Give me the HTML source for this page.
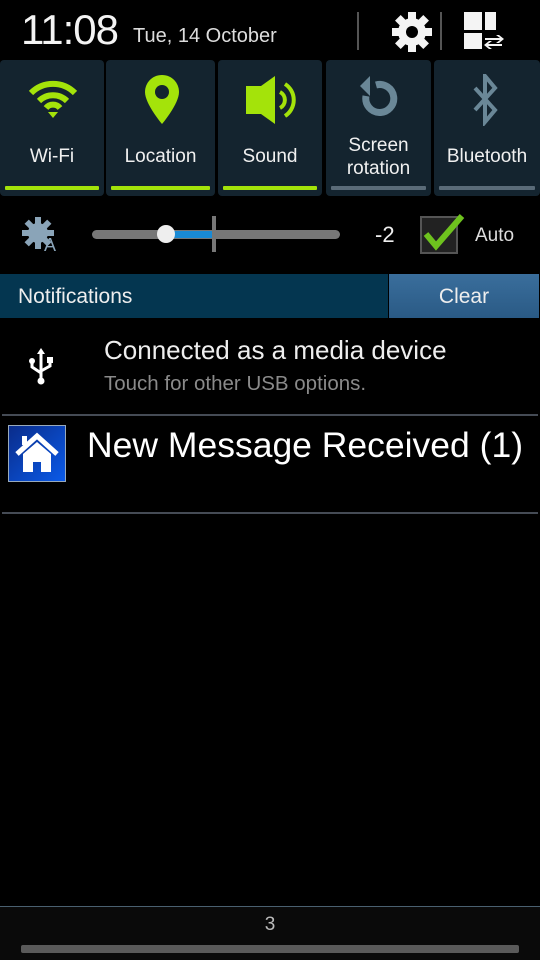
<!DOCTYPE html><html><head><style>
body{margin:0;width:540px;height:960px;background:#000;font-family:"Liberation Sans",sans-serif;color:#fff;position:relative;overflow:hidden}
.a{position:absolute}
.tile{position:absolute;top:60px;height:136px;background:#14242f;border-radius:4px}
.tile .l{position:absolute;left:0;right:0;text-align:center;font-size:19px;color:#f0f0f0}
.tile .b{position:absolute;left:5px;right:5px;top:126px;height:4px;border-radius:1px}
.g{background:#a4e30a}.gr{background:#5a6b78}
</style></head><body>
<div class="a" style="left:21px;top:6px;font-size:42px;color:#f4f4f4;letter-spacing:-1px">11:08</div>
<div class="a" style="left:133px;top:25px;font-size:20px;color:#ddd">Tue, 14 October</div>
<div class="a" style="left:357px;top:12px;width:2px;height:38px;background:#555"></div>
<div class="a" style="left:440px;top:12px;width:2px;height:38px;background:#555"></div>
<svg class="a" style="left:390px;top:10px" width="44" height="44" viewBox="0 0 44 44"><g fill="#f4f4f4" transform="translate(22 22)"><circle r="14"/><rect x="-4" y="-20" width="8" height="40"/><rect x="-4" y="-20" width="8" height="40" transform="rotate(45)"/><rect x="-4" y="-20" width="8" height="40" transform="rotate(90)"/><rect x="-4" y="-20" width="8" height="40" transform="rotate(135)"/></g><circle cx="22" cy="22" r="6" fill="#000"/></svg>
<svg class="a" style="left:464px;top:12px" width="40" height="40"><g fill="#f4f4f4"><rect x="0" y="0" width="18" height="18"/><rect x="21" y="0" width="11" height="18"/><rect x="0" y="21" width="18" height="16"/><path d="M21 26h15l-4-3h3l5 4-5 4h-3l4-3H21zM38 32H24l4-3h-3l-5 4 5 4h3l-4-3h14z"/></g></svg>

<div class="tile" style="left:0;width:104px"><svg class="a" style="left:28px;top:20px" width="50" height="40" viewBox="0 0 50 40"><g fill="none" stroke="#a4e30a" stroke-width="6"><path d="M3 13a31 31 0 0 1 44 0"/><path d="M11 21a20 20 0 0 1 28 0"/><path d="M18 28a9 9 0 0 1 14 0"/></g><path d="M25 38l-5-6h10z" fill="#a4e30a"/></svg><div class="l" style="top:86px">Wi-Fi</div><div class="b g"></div></div>
<div class="tile" style="left:106px;width:109px"><svg class="a" style="left:37px;top:14px" width="38" height="52" viewBox="0 0 38 52"><path d="M19 1C9 1 2 9 2 18c0 12 17 32 17 32s17-20 17-32C36 9 29 1 19 1z" fill="#a4e30a"/><circle cx="19" cy="18" r="7" fill="#14242f"/></svg><div class="l" style="top:86px">Location</div><div class="b g"></div></div>
<div class="tile" style="left:218px;width:104px"><svg class="a" style="left:20px;top:16px" width="62" height="48" viewBox="0 0 62 48"><path d="M8 10h15L37 0v48L23 38H8z" fill="#a4e30a"/><g fill="none" stroke="#a4e30a" stroke-width="4"><path d="M42 16a9 9 0 0 1 0 16"/><path d="M47 8a19 19 0 0 1 0 32"/></g></svg><div class="l" style="top:86px">Sound</div><div class="b g"></div></div>
<div class="tile" style="left:326px;width:105px"><svg class="a" style="left:30px;top:16px" width="46" height="46" viewBox="0 0 46 46"><path d="M10 20A14 14 0 1 0 20 9" fill="none" stroke="#6a8797" stroke-width="7"/><path d="M14 0v20l-10-10z" fill="#6a8797"/></svg><div class="l" style="top:74px;line-height:23px">Screen<br>rotation</div><div class="b gr"></div></div>
<div class="tile" style="left:434px;width:106px"><svg class="a" style="left:36px;top:14px" width="32" height="52" viewBox="0 0 32 52"><path d="M5 14l20 22-10 12V2l10 12L5 36" fill="none" stroke="#6a8797" stroke-width="4"/></svg><div class="l" style="top:86px">Bluetooth</div><div class="b gr"></div></div>

<svg class="a" style="left:22px;top:216px" width="40" height="36" viewBox="0 0 40 36"><g fill="#8aa4b8" transform="translate(16 17)"><circle r="10"/><rect x="-3" y="-16" width="6" height="32"/><rect x="-3" y="-16" width="6" height="32" transform="rotate(45)"/><rect x="-3" y="-16" width="6" height="32" transform="rotate(90)"/><rect x="-3" y="-16" width="6" height="32" transform="rotate(135)"/></g><text x="22" y="35" font-size="18" fill="#8aa4b8" font-family="Liberation Sans">A</text></svg>
<div class="a" style="left:92px;top:230px;width:248px;height:9px;background:#777;border-radius:5px"></div>
<div class="a" style="left:168px;top:231px;width:46px;height:7px;background:#1a8ad4"></div>
<div class="a" style="left:212px;top:216px;width:4px;height:36px;background:#777"></div>
<div class="a" style="left:157px;top:225px;width:18px;height:18px;background:#eee;border-radius:50%"></div>
<div class="a" style="left:375px;top:222px;font-size:22px;color:#eee">-2</div>
<div class="a" style="left:420px;top:216px;width:38px;height:38px;border:2px solid #555;background:#222;box-sizing:border-box"></div>
<svg class="a" style="left:420px;top:212px" width="46" height="40"><path d="M6 22l10 12L42 4" fill="none" stroke="#6ec21e" stroke-width="6"/></svg>
<div class="a" style="left:475px;top:225px;font-size:19px;color:#ddd">Auto</div>

<div class="a" style="left:0;top:274px;width:388px;height:44px;background:#043650"></div>
<div class="a" style="left:18px;top:285px;font-size:21px;color:#eee">Notifications</div>
<div class="a" style="left:389px;top:274px;width:150px;height:44px;background:linear-gradient(#3a6e9c,#2a5a85);text-align:center;line-height:46px;font-size:21px;color:#eee">Clear</div>

<svg class="a" style="left:28px;top:348px" width="26" height="38" viewBox="0 0 26 38"><g fill="#fff" stroke="#fff"><path d="M13 2v32" stroke-width="3"/><path d="M13 0l-4 6h8z" stroke="none"/><circle cx="13" cy="33" r="3.5" stroke="none"/><circle cx="4" cy="13" r="3" stroke="none"/><rect x="19" y="9" width="6" height="6" stroke="none"/><path d="M4 13v6l9 6M22 12v6l-9 5" fill="none" stroke-width="3"/></g></svg>
<div class="a" style="left:104px;top:335px;font-size:26px;color:#eee">Connected as a media device</div>
<div class="a" style="left:104px;top:372px;font-size:20.5px;color:#8a8a8a">Touch for other USB options.</div>
<div class="a" style="left:2px;top:414px;width:536px;height:2px;background:#454b55"></div>

<div class="a" style="left:8px;top:425px;width:58px;height:57px;border:1px solid #9ab;box-sizing:border-box;background:linear-gradient(135deg,#0a2c8a,#0a5ae8)"></div>
<svg class="a" style="left:14px;top:432px" width="46" height="44" viewBox="0 0 46 44"><path d="M3 22L23 4l20 18" fill="none" stroke="#fff" stroke-width="5"/><path d="M9 22L23 10l14 12v18H27V30h-8v10H9z" fill="#fff"/><rect x="8" y="4" width="5" height="9" fill="#fff"/></svg>
<div class="a" style="left:87px;top:425px;font-size:35.5px;color:#fff">New Message Received (1)</div>
<div class="a" style="left:2px;top:512px;width:536px;height:2px;background:#454b55"></div>

<div class="a" style="left:0;top:906px;width:540px;height:1px;background:#4a6070"></div>
<div class="a" style="left:0;top:907px;width:540px;height:53px;background:#0a0a0a"></div>
<div class="a" style="left:0;top:914px;width:540px;text-align:center;font-size:19px;color:#bbb">3</div>
<div class="a" style="left:21px;top:945px;width:498px;height:8px;background:#5a5a5a;border-radius:2px"></div>
</body></html>
